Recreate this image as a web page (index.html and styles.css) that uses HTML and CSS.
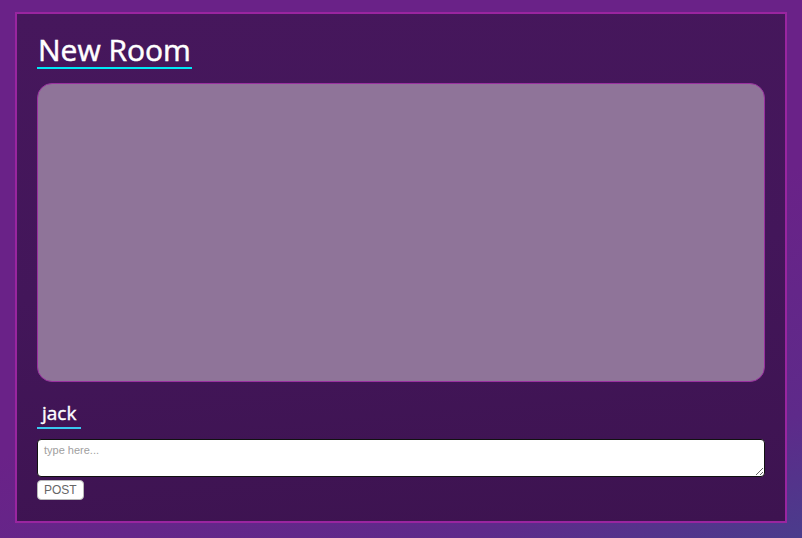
FILE: index.html
```html
<!DOCTYPE html>
<html>
<head>
<meta charset="utf-8">
<link rel="stylesheet" href="styles.css">
</head>
<body>
<div class="panel">
  <h1 class="title">New Room</h1>
  <div class="messages"></div>
  <div class="user">jack</div>
  <textarea class="input" placeholder="type here..."></textarea>
  <div class="actions"><button class="post">POST</button></div>
</div>
</body>
</html>
```
FILE: styles.css
```css
html, body {
  margin: 0;
  height: 100%;
}
body {
  background: linear-gradient(160deg, #6a2288 0%, #6a2288 55%, #5e2a8a 85%, #4a3c8c 100%);
  padding: 12px 15px 0 15px;
  box-sizing: border-box;
  font-family: "Open Sans", sans-serif;
}
.panel {
  box-sizing: border-box;
  width: 772px;
  height: 511px;
  border: 2px solid #9a25a0;
  background: linear-gradient(175deg, #46175c 0%, #43165a 50%, #3d1350 100%);
  padding: 18px 20px 0 20px;
  display: flex;
  flex-direction: column;
  align-items: flex-start;
}
.title {
  margin: 0;
  font-family: "Open Sans", sans-serif;
  font-weight: 400;
  font-size: 30px;
  line-height: 35px;
  color: #ffffff;
  -webkit-text-stroke: 0.5px #ffffff;
  border-bottom: 2px solid #00e8f5;
  padding: 0 1px 0 1px;
}
.messages {
  margin-top: 14px;
  align-self: stretch;
  height: 297px;
  background: #8f7499;
  border: 1px solid #9a30a0;
  border-radius: 15px;
}
.user {
  margin-top: 19px;
  font-size: 19px;
  line-height: 24px;
  color: #ffffff;
  -webkit-text-stroke: 0.4px #ffffff;
  padding: 0 5px 2px 5px;
  border-bottom: 2px solid #3ac8f0;
}
.input {
  margin-top: 10px;
  align-self: stretch;
  box-sizing: border-box;
  height: 38px;
  border: 1px solid #111;
  border-radius: 4px;
  background: #fff;
  font-family: "Liberation Sans", Arial, sans-serif;
  font-size: 11px;
  padding: 4px 6px;
  resize: vertical;
}
.input::placeholder {
  color: #a0a0a0;
}
.actions {
  display: flex;
  margin-top: 3px;
}
.post {
  height: 20px;
  padding: 0 6px;
  background: #fff;
  border: 1px solid #b8b8b8;
  border-radius: 4px;
  font-family: "Liberation Sans", Arial, sans-serif;
  font-size: 12px;
  color: #666;
}
```
